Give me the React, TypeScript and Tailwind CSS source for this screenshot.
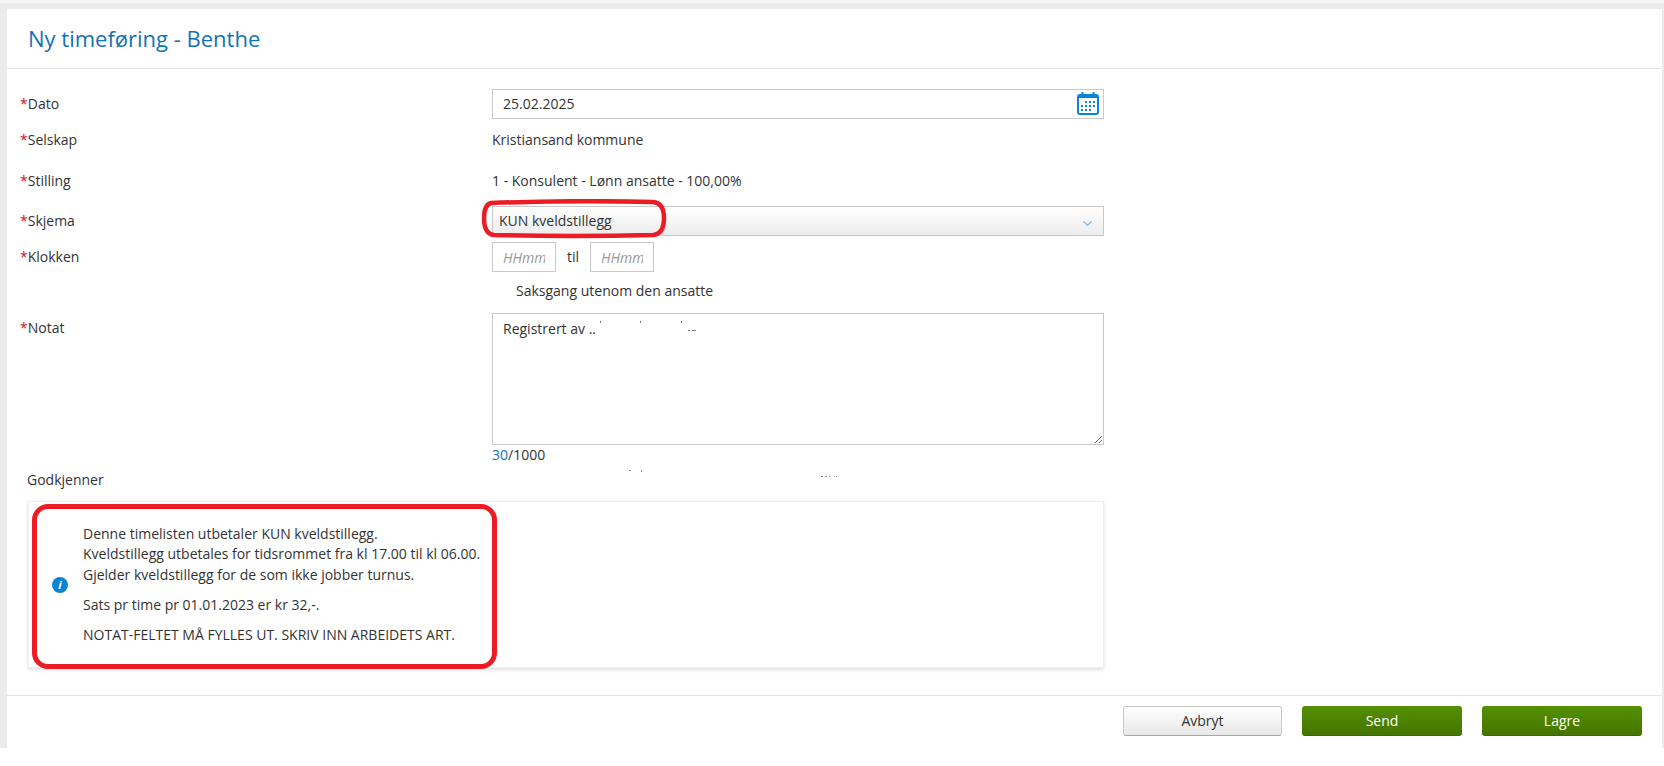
import { ChevronDown } from "lucide-react";

const inputClass =
  "h-[30px] border border-[#c8c8c8] bg-white px-[10px] text-sm text-[#333] outline-none placeholder:italic placeholder:text-[#999]";

const Label = ({ text, required = true }: { text: string; required?: boolean }) => (
  <div className="w-[472px] shrink-0 leading-5">
    {required && <span className="text-[#c8102e]">*</span>}
    {text}
  </div>
);

const CalendarIcon = () => (
  <svg width="22" height="23" viewBox="0 0 22 23" className="absolute right-[5px] top-[3px]">
    <rect x="1" y="3" width="20" height="19" rx="2" fill="none" stroke="#0a84d6" strokeWidth="2" />
    <rect x="1" y="3" width="20" height="3" fill="#0a84d6" />
    <rect x="4.5" y="0" width="2" height="5" fill="#0a84d6" />
    <rect x="15.5" y="0" width="2" height="5" fill="#0a84d6" />
    {[
      [8, 9], [12, 9], [16, 9],
      [4, 13], [8, 13], [12, 13], [16, 13],
      [4, 17], [8, 17], [12, 17],
    ].map(([x, y]) => (
      <rect key={`${x}-${y}`} x={x} y={y} width="2" height="2" fill="#0a84d6" />
    ))}
  </svg>
);

// Hand drawn red ring round the selected form
const SelectRing = () => (
  <svg width="186" height="40" viewBox="0 0 186 40" fill="none" className="absolute left-[-12px] top-[-8px]">
    <path
      d="M10 4 Q90 1 172 3 Q183 4 183 19 Q183 35 172 36 Q90 38 13 36 Q3 35 3 19 Q3 6 10 4 Z"
      stroke="#ed1c24"
      strokeWidth="4.5"
    />
  </svg>
);

const specks = [
  "left-[108px] top-[8px] w-[1px] h-[2px]",
  "left-[148px] top-[8px] w-[1px] h-[2px]",
  "left-[189px] top-[8px] w-[1px] h-[2px]",
  "left-[196px] top-[17px] w-[2px] h-[1px]",
  "left-[200px] top-[17px] w-[4px] h-[1px]",
];

const counterSpecks = [
  "left-[609px] top-[25px] w-[2px] h-[1px]",
  "left-[621px] top-[25px] w-[1px] h-[2px]",
  "left-[801px] top-[31px] w-[2px] h-[1px]",
  "left-[805px] top-[31px] w-[2px] h-[1px]",
  "left-[809px] top-[31px] w-[1px] h-[1px]",
  "left-[816px] top-[31px] w-[1px] h-[1px]",
];

const App = () => {
  return (
    <div className="min-h-[766px] bg-white font-['Open_Sans',sans-serif] text-sm text-[#333]">
      <div className="h-[748px] border-t-[3px] border-[#f5f5f5] bg-[#ebebeb] pl-[7px] pr-[2px] pt-[6px]">
        <div className="h-full bg-white">
          {/* Header */}
          <div className="flex h-[60px] items-center border-b border-[#e3e3e3] pl-[21px]">
            <h1 className="text-[22px] text-[#1274b4]">Ny timeføring - Benthe</h1>
          </div>

          <div className="pl-[13px] pt-[20px]">
            <div className="flex items-center">
              <Label text="Dato" />
              <div className="relative w-[612px]">
                <input readOnly defaultValue="25.02.2025" className={`${inputClass} w-full pb-[2px]`} />
                <CalendarIcon />
              </div>
            </div>

            <div className="mt-[11px] flex">
              <Label text="Selskap" />
              <div className="leading-5">Kristiansand kommune</div>
            </div>

            <div className="mt-[21px] flex">
              <Label text="Stilling" />
              <div className="leading-5">1 - Konsulent - Lønn ansatte - 100,00%</div>
            </div>

            <div className="mt-[15px] flex items-center">
              <Label text="Skjema" />
              <div className="relative flex h-[30px] w-[612px] items-center justify-between border border-[#c8c8c8] bg-gradient-to-b from-white to-[#ececec] pl-[6px] pr-[8px]">
                <span>KUN kveldstillegg</span>
                <ChevronDown className="mt-1 h-[15px] w-[15px] text-[#7db8e4]" />
                <SelectRing />
              </div>
            </div>

            <div className="mt-[6px] flex items-center">
              <Label text="Klokken" />
              <div className="flex items-center">
                <input placeholder="HHmm" className={`${inputClass} w-[64px]`} />
                <span className="mx-[11px]">til</span>
                <input placeholder="HHmm" className={`${inputClass} w-[64px]`} />
              </div>
            </div>

            <div className="mt-[9px] pl-[496px] leading-5">Saksgang utenom den ansatte</div>

            <div className="mt-[12px] flex">
              <div className="pt-[5px]">
                <Label text="Notat" />
              </div>
              <div className="relative h-[132px] w-[612px]">
                <textarea
                  readOnly
                  defaultValue="Registrert av .."
                  className="block h-full w-full border border-[#c8c8c8] px-[10px] py-[5px] leading-5 outline-none"
                />
                {specks.map((cls) => (
                  <span key={cls} className={`absolute bg-[#777] ${cls}`} />
                ))}
              </div>
            </div>

            <div className="relative pl-[472px] leading-5">
              <span className="text-[#1274b4]">30</span>/1000
              {counterSpecks.map((cls) => (
                <span key={cls} className={`absolute bg-[#888] ${cls}`} />
              ))}
            </div>

            <div className="ml-[7px] mt-[5px] leading-5">Godkjenner</div>

            {/* Info box */}
            <div className="relative ml-[8px] mt-[11px] flex h-[167px] w-[1076px] items-center gap-[15px] border border-[#eeeeee] pl-[23px] shadow-[0_2px_4px_rgba(0,0,0,0.12)]">
              <span className="flex h-4 w-4 shrink-0 items-center justify-center rounded-full bg-[#0a84d6] text-[11px] font-bold italic leading-none text-white">
                i
              </span>
              <div className="leading-[20.5px]">
                <p>Denne timelisten utbetaler KUN kveldstillegg.</p>
                <p>Kveldstillegg utbetales for tidsrommet fra kl 17.00 til kl 06.00.</p>
                <p>Gjelder kveldstillegg for de som ikke jobber turnus.</p>
                <p className="mt-[9.5px]">Sats pr time pr 01.01.2023 er kr 32,-.</p>
                <p className="mt-[9.5px]">NOTAT-FELTET MÅ FYLLES UT. SKRIV INN ARBEIDETS ART.</p>
              </div>
              <div className="absolute left-[3px] top-[2px] h-[165px] w-[465px] rounded-[16px] border-[5px] border-[#ed1c24]" />
            </div>
          </div>

          {/* Footer */}
          <div className="mt-[27px] flex justify-end gap-5 border-t border-[#e3e3e3] pr-[20px] pt-[10px]">
            <button className="h-[30px] w-[159px] rounded-[3px] border border-[#c8c8c8] border-b-[#a8a8a8] bg-gradient-to-b from-white to-[#e8e8e8] text-sm text-[#333]">
              Avbryt
            </button>
            <button className="h-[30px] w-[160px] rounded-[3px] border-b border-[#3c6600] bg-gradient-to-b from-[#549100] to-[#457400] text-sm text-white">
              Send
            </button>
            <button className="h-[30px] w-[160px] rounded-[3px] border-b border-[#3c6600] bg-gradient-to-b from-[#549100] to-[#457400] text-sm text-white">
              Lagre
            </button>
          </div>
        </div>
      </div>
    </div>
  );
};

export default App;
